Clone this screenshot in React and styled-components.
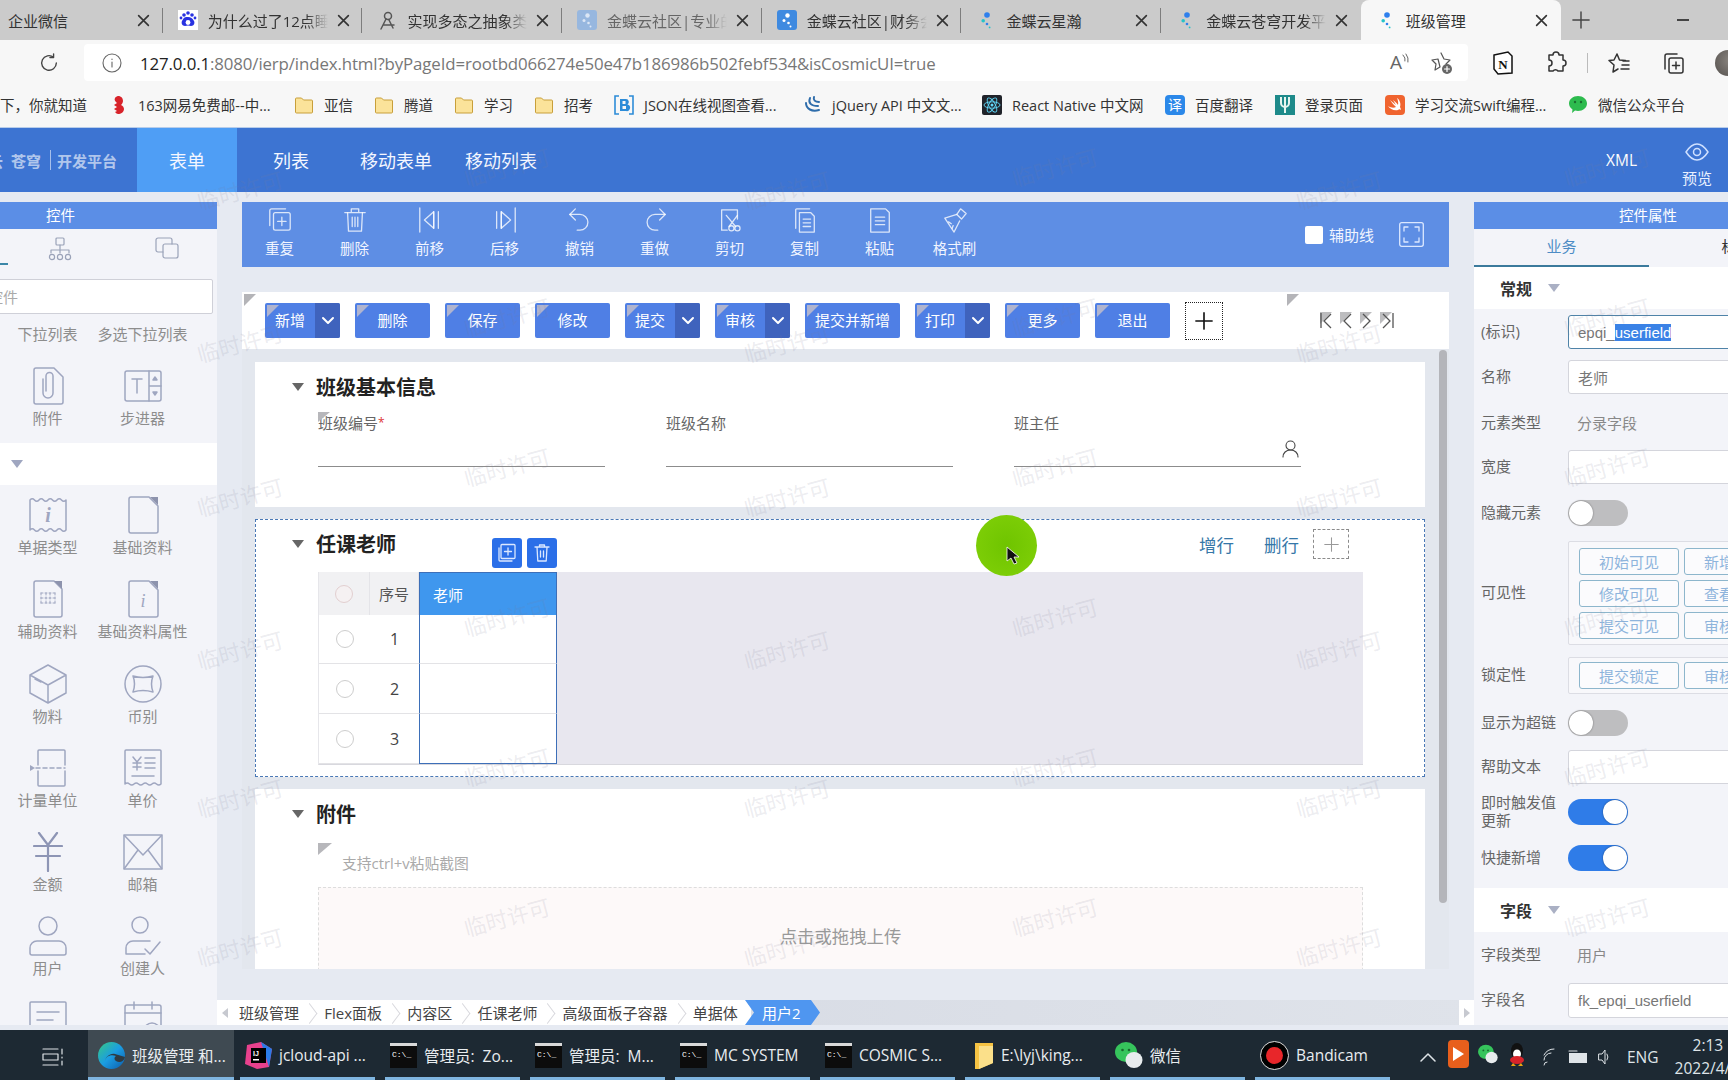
import React from "react";
import styled, { createGlobalStyle } from "styled-components";

const Global = createGlobalStyle`
  html, body { margin: 0; padding: 0; width: 1728px; height: 1080px; overflow: hidden; background: #e6eaf2; }
  body { font-family: "Open Sans", "Noto Sans CJK SC", sans-serif; }
  #root { width: 1728px; height: 1080px; }
  * { box-sizing: border-box; }
`;
const Page = styled.div`position: relative; width: 1728px; height: 1080px; overflow: hidden; display: flex; flex-direction: column; background: #e6eaf2;`;
const Ico = styled.svg`display: block; flex: none; fill: none; stroke: currentColor; stroke-width: 1.5; stroke-linecap: round; stroke-linejoin: round;`;

/* ---- browser chrome ---- */
const TabStrip = styled.div`display: flex; height: 40px; flex: none; background: #cbcbcb; padding-left: 0; margin-left: -37px; width: 1800px;`;
const Tab = styled.div`
  position: relative; flex: none; width: 199.7px; height: 40px; display: flex; align-items: center; padding-left: 15px;
  background: ${p => (p.$active ? "#f7f7f7" : "transparent")};
  border-radius: ${p => (p.$active ? "8px 8px 0 0" : "0")};
  &::after { content: ""; display: ${p => (p.$noSep ? "none" : "block")}; position: absolute; right: 0; top: 8px; height: 25px; width: 1px; background: #7d7d7d; }
`;
const TabIcon = styled.span`flex: none; width: 20px; height: 20px; margin-right: 10px; display: block;`;
const TabText = styled.span`
  flex: none; width: 120px; overflow: hidden; white-space: nowrap; font-size: 15px; color: ${p => (p.$dim ? "#666" : "#333")};
  -webkit-mask-image: ${p => (p.$fade ? "linear-gradient(90deg,#000 82%,transparent 100%)" : "none")};
`;
const TabClose = styled.span`flex: none; margin-left: 9px; color: #333; display: block;`;
const NewTab = styled.div`flex: none; margin-left: 11px; color: #444; display: flex; align-items: center;`;
const WinMin = styled.div`flex: none; margin-left: 87px; width: 12px; height: 1.5px; background: #444; align-self: center;`;

const AddressRow = styled.div`flex: none; height: 46px; background: #f7f7f7; display: flex; align-items: center; padding-top: 0; position: relative;`;
const Reload = styled.div`flex: none; width: 84px; padding-left: 38px; color: #444;`;
const UrlBar = styled.div`flex: none; width: 1384px; height: 37px; margin-top: -1px; background: #fff; border-radius: 4px; display: flex; align-items: center; padding-left: 18px; color: #666;`;
const UrlText = styled.div`flex: none; width: 810px; margin: 2px 0 0 18px; font-size: 16.85px; letter-spacing: -0.12px; color: #777; white-space: nowrap; span { color: #222; }`;
const UrlRight = styled.div`margin-left: auto; display: flex; align-items: center; gap: 20px; padding-right: 14px; color: #555;`;
const ReadAloud = styled.div`font-size: 19px; color: #666; line-height: 1; display: flex;`;
const Ext = styled.div`flex: none; display: flex; align-items: center; margin-left: 24px; color: #333; gap: 30px;`;
const Divider = styled.span`display: block; width: 1px; height: 20px; background: #bbb; margin: 0 -11px;`;
const Avatar = styled.span`display: block; width: 26px; height: 26px; border-radius: 50%; background: radial-gradient(circle at 60% 40%, #8a8580, #54504d); flex: none;`;

const BookmarkBar = styled.div`flex: none; height: 42px; background: #f7f7f7; display: flex; align-items: center; overflow: hidden; border-bottom: 1px solid #b8cdea; padding-bottom: 4px;`;
const Bookmark = styled.div`flex: none; width: ${p => p.$w}px; display: flex; align-items: center; gap: ${p => p.$g ?? 10}px; font-size: 14.5px; color: #333; white-space: nowrap; overflow: hidden;`;
const BIcon = styled.span`display: block; flex: none; width: 20px; height: 20px;`;

const Header = styled.div`flex: none; height: 64px; background: #3d74d2; display: flex; align-items: stretch; color: #fff;`;
const Logo = styled.div`flex: none; width: 137px; display: flex; align-items: center; font-size: 15px; font-weight: 700; color: rgba(255,255,255,.62); white-space: nowrap; overflow: hidden;`;
const LogoMark = styled.span`margin-left: -12px; width: 23px;`;
const LogoBar = styled.span`display: block; width: 1px; height: 20px; background: rgba(255,255,255,.55); margin: 0 6px 0 9px;`;
const NavItem = styled.div`flex: none; width: ${p => p.$w}px; display: flex; align-items: center; justify-content: center; font-size: 18px; color: #f4f7ff; background: ${p => (p.$active ? "#4f9ef5" : "transparent")};`;
const HeadRight = styled.div`margin-left: auto; display: flex; align-items: center; padding-right: 16px;`;
const Xml = styled.div`font-size: 15.5px; margin-right: 45px; margin-top: 0;`;
const Preview = styled.div`display: flex; flex-direction: column; align-items: center; font-size: 15px; gap: 3px; padding-top: 8px; color: #eaf1ff;`;

/* ---- main ---- */
const Main = styled.div`flex: none; height: 838px; display: flex; padding-top: 10px;`;
const PanelTitle = styled.div`flex: none; height: 27px; background: #5b8ee6; color: #fff; font-size: 14.5px; display: flex; align-items: center; padding-left: ${p => p.$pl}px; padding-bottom: 2px;`;

const LeftPanel = styled.aside`flex: none; width: 217px; height: 823px; background: #f3f4f9; overflow: hidden; display: flex; flex-direction: column;`;
const LeftTabs = styled.div`position: relative; flex: none; height: 38px; display: flex; gap: 83px; padding: 8px 0 0 48px; color: #9aa2b8;
  &::before { content: ""; position: absolute; left: 0; bottom: 2px; width: 8px; height: 2px; background: #3b87a8; }`;
const Search = styled.div`flex: none; margin: 12px 0 0 -50px; width: 263px; height: 35px; background: #fff; border: 1px solid #cfd0d8; border-radius: 2px; display: flex; align-items: center; padding-left: 7px; font-size: 15px; color: #aaa;`;
const PaletteGrid = styled.div`flex: none; display: grid; grid-template-columns: 95px 95px; grid-auto-rows: ${p => p.$row}px; padding-top: ${p => p.$pt}px;`;
const TextOnly = styled.div`flex: none; display: grid; grid-template-columns: 95px 95px; margin-top: 10px; padding-bottom: 1px; font-size: 15px; line-height: 20px; color: #8d8d8d; text-align: center;`;
const Cell = styled.div`display: flex; flex-direction: column; align-items: center; color: #9fa6c0;`;
const CellIcon = styled.div`height: 40px; display: flex; align-items: center; justify-content: center;`;
const CellLabel = styled.div`margin-top: 2px; font-size: 15px; line-height: 20px; color: #8d8d8d; white-space: nowrap;`;
const GroupBand = styled.div`flex: none; height: 42px; background: #fff; padding-left: 11px; display: flex; align-items: center; margin-top: 0;`;
const DownTri = styled.span`display: block; flex: none; width: 0; height: 0; border-left: ${p => p.$s}px solid transparent; border-right: ${p => p.$s}px solid transparent; border-top: ${p => p.$s * 1.35}px solid ${p => p.$c};`;

const Center = styled.section`flex: none; width: 1257px; display: flex; flex-direction: column;`;
const CenterBody = styled.div`flex: none; height: 767px; padding: 0 25px; display: flex; flex-direction: column;`;
const Toolbar = styled.div`flex: none; height: 65px; background: #5e8ee4; display: flex; color: rgba(255,255,255,.78);`;
const ToolItem = styled.div`flex: none; width: 75px; display: flex; flex-direction: column; align-items: center; padding-top: 5px;`;
const ToolLabel = styled.div`margin-top: 6px; font-size: 14.5px; line-height: 20px; color: #f1f5ff;`;
const ToolRight = styled.div`margin-left: auto; display: flex; align-items: center; padding-right: 25px; color: #f1f5ff; font-size: 15px;`;
const CheckBox = styled.span`display: block; width: 18px; height: 18px; background: #fff; border-radius: 2px; margin-right: 6px;`;
const FullScreen = styled.div`margin-left: 25px; color: #dce8ff;`;

const ButtonBar = styled.div`
  position: relative; flex: none; height: 57px; margin-top: 25px; background: #fff; display: flex; align-items: center; padding-left: 23px; gap: 15px;
  &::before { content: ""; position: absolute; left: 2px; top: 2px; width: 12px; height: 12px; background: #b4b4b8; clip-path: polygon(0 0,100% 0,0 100%); }
  &::after { content: ""; position: absolute; left: 1045px; top: 2px; width: 12px; height: 12px; background: #b4b4b8; clip-path: polygon(0 0,100% 0,0 100%); }
`;
const ActBtn = styled.div`
  position: relative; flex: none; width: ${p => p.$w || 75}px; height: 35px; border-radius: 2px; background: #4f7fe5; color: #fff; font-size: 15px; display: flex; overflow: hidden;
  &::before { content: ""; position: absolute; left: 2px; top: 2px; width: 12px; height: 12px; background: #b0b4cf; clip-path: polygon(0 0,100% 0,0 100%); }
`;
const ActText = styled.span`flex: 1; display: flex; align-items: center; justify-content: center; padding-bottom: 2px;`;
const ActCaret = styled.span`flex: none; width: 25px; background: #3f63bd; display: flex; align-items: center; justify-content: center; color: #fff;`;
const PlusBox = styled.div`flex: none; width: 38px; height: 38px; border: 1px dotted #222; display: flex; align-items: center; justify-content: center; color: #111;`;
const PageNav = styled.div`margin-left: auto; padding-right: 55px; display: flex; gap: 6px; color: #555;`;

const Body = styled.div`flex: none; height: 620px; display: flex; background: #e3e7ee;`;
const Sections = styled.div`flex: none; width: 1183px; padding-left: 13px; display: flex; flex-direction: column; overflow: hidden;`;
const Track = styled.div`flex: none; width: 24px; padding: 1px 2px 66px 14px;`;
const Thumb = styled.div`height: 100%; background: #b4b5ba; border-radius: 4px;`;
const Sec = styled.div`
  position: relative; flex: ${p => (p.$h ? "none" : "1")}; height: ${p => (p.$h ? p.$h + "px" : "auto")}; margin-top: ${p => p.$mt}px; background: #fff; overflow: hidden;
  outline: ${p => (p.$selected ? "1px dashed #4a78b5" : "none")}; outline-offset: -1px;
`;
const SecHead = styled.div`height: 50px; display: flex; align-items: center; padding-left: 37px;`;
const SecTitle = styled.h3`margin: 1px 0 0 12px; font-size: 20px; font-weight: 700; color: #222; line-height: 1;`;
const SecActions = styled.div`margin-left: auto; padding-right: 76px; display: flex; align-items: center; color: #3577a8; font-size: 17.5px;`;
const RowAct = styled.span`display: block; margin-right: 30px;`;
const SmallPlus = styled.div`width: 36px; height: 30px; margin-left: -16px; border: 1px dashed #8b8b8b; display: flex; align-items: center; justify-content: center; color: #999;`;
const Fields = styled.div`display: grid; grid-template-columns: repeat(3, 287px); column-gap: 61px; margin-left: 63px;`;
const Field = styled.div`position: relative; height: 55px; border-bottom: 1px solid #8c8c8c; font-size: 15px; line-height: 22px; color: #666;
  &::before { content: ""; display: ${p => (p.$mark ? "block" : "none")}; position: absolute; left: 0; top: 0; width: 12px; height: 10px; background: #b7b7bb; clip-path: polygon(0 0,100% 0,0 100%); }
  em { color: #d33; font-style: normal; font-size: 12px; vertical-align: top; }`;
const FieldIcon = styled.div`position: absolute; right: 2px; top: 28px; color: #444;`;
const FloatBtns = styled.div`position: absolute; left: 237px; top: 19px; display: flex; gap: 5px;`;
const FloatBtn = styled.div`width: 30px; height: 30px; border-radius: 3px; background: #2b6fe8; color: #dbe8ff; display: flex; align-items: center; justify-content: center;`;

const Table = styled.div`margin: 3px 0 0 63px; width: 1045px; display: grid; grid-template-columns: 51px 49px 138px 1fr; grid-template-rows: 43px 49px 50px 50px; border-bottom: 1px solid #d8d8de; border-left: 1px solid #e6e6ea; font-size: 15px;`;
const HeadCell = styled.div`background: #f1f1f3; color: #555; display: flex; align-items: center; justify-content: center; border-right: 1px solid #e4e4e8;`;
const TeacherHead = styled.div`background: #3f97ee; color: #fff; display: flex; align-items: center; padding-left: 13px; border: solid #3d6fb8; border-width: 1px 1px 0 1px;`;
const BodyCell = styled.div`display: flex; align-items: center; justify-content: center; border-bottom: 1px solid #e3e3e6; color: #444; font-size: 16px;`;
const TeacherCell = styled.div`background: #fff; border-left: 1px solid #3d6fb8; border-right: 1px solid #3d6fb8; border-bottom: 1px solid ${p => (p.$last ? "#3d6fb8" : "#e3e3e6")};`;
const Rest = styled.div`grid-column: 4; grid-row: 1 / 5; background: #e8e7ef;`;
const Radio = styled.span`display: block; width: 18px; height: 18px; border-radius: 50%; border: 1px solid ${p => (p.$head ? "#e2cfd0" : "#cdcdcd")}; background: ${p => (p.$head ? "#f5f1f2" : "#fff")};`;

const TipRow = styled.div`position: relative; height: 48px; margin-left: 63px; padding: 14px 0 0 24px; font-size: 14.8px; line-height: 20px; color: #aaa;
  &::before { content: ""; position: absolute; left: 0; top: 4px; width: 14px; height: 12px; background: #b7b7bb; clip-path: polygon(0 0,100% 0,0 100%); }`;
const Upload = styled.div`margin-left: 63px; width: 1045px; height: 200px; border: 1px dashed #ddd; background: #fdf9f9; padding-top: 35px; text-align: center; font-size: 17.4px; line-height: 26px; color: #999;`;

const Crumbs = styled.div`flex: none; height: 25px; margin-top: 31px; display: flex; background: linear-gradient(90deg,#d4d8e2,#dfe3ea); font-size: 15px; color: #444;`;
const CrumbEnd = styled.div`flex: none; width: ${p => p.$w}px; background: #fff; display: flex; align-items: center; justify-content: center;
  ${p => (p.$right ? "margin-left: auto;" : "")}
`;
const SideTri = styled.span`display: block; width: 0; height: 0; border-top: 5px solid transparent; border-bottom: 5px solid transparent;
  ${p => (p.$dir === "l" ? "border-right: 6px solid #c7c9d0;" : "border-left: 6px solid #c7c9d0;")}`;
const CrumbRow = styled.div`flex: none; display: flex; align-items: center; background: #fff; padding-left: 7px; width: 519px;`;
const Crumb = styled.span`position: relative; flex: none; margin-right: 25.2px; white-space: nowrap;
  &::after { content: ""; position: absolute; right: -17px; top: 5px; width: 12px; height: 12px; border-top: 1px solid #d8d8dd; border-right: 1px solid #d8d8dd; transform: rotate(45deg) skew(8deg,8deg); }`;
const CrumbActive = styled.span`flex: none; width: 75px; margin-left: -6px; padding-left: 17px; display: flex; align-items: center; color: #fff; background: #4f96f0; clip-path: polygon(0 0, calc(100% - 9px) 0, 100% 50%, calc(100% - 9px) 100%, 0 100%, 9px 50%);`;

/* ---- right panel ---- */
const RightPanel = styled.aside`flex: none; width: 254px; height: 823px; background: #f3f4f9; overflow: hidden; display: flex; flex-direction: column;`;
const RightTabs = styled.div`flex: none; height: 38px; display: flex; font-size: 15px;`;
const RightTab = styled.div`flex: none; width: 175px; display: flex; align-items: center; justify-content: center; color: ${p => (p.$active ? "#4d8cc5" : "#333")}; border-bottom: 2px solid ${p => (p.$active ? "#3b7a9c" : "transparent")}; padding-bottom: 4px;`;
const PropSection = styled.div`flex: none; height: ${p => p.$h}px; margin-top: ${p => p.$mt || 0}px; background: #fff; display: flex; align-items: center; padding-left: 26px; gap: 16px; font-size: 16px; font-weight: 700; color: #333;`;
const PropRow = styled.div`flex: none; height: ${p => p.$h}px; margin-top: ${p => p.$mt}px; display: flex; align-items: center; padding-left: 7px; width: 500px;`;
const PropLabel = styled.div`flex: none; width: 87px; font-size: 15px; line-height: 18px; color: #666; padding: 0 8px 2px 0;`;
const PropValue = styled.div`padding: 0 0 2px 9px; font-size: 15px; color: #888;`;
const PropInput = styled.div`flex: none; width: 300px; height: ${p => (p.$tall ? 35 : 34)}px; background: #fff; border: 1px solid ${p => (p.$focus ? "#4f83a8" : "#d4d5dc")}; border-radius: 3px; display: flex; align-items: center; padding-left: 9px; font-size: 15px; color: #777;`;
const Mono = styled.span`font-family: "Liberation Sans", sans-serif; white-space: nowrap; mark { background: #3a82e6; color: #fff; }`;
const Toggle = styled.div`position: relative; flex: none; width: 60px; height: 26px; border-radius: 13px; background: ${p => (p.$on ? "#2f7ce8" : "#bebec0")};
  &::after { content: ""; position: absolute; top: 1px; ${p => (p.$on ? "right: 1px;" : "left: 1px;")} width: 24px; height: 24px; border-radius: 50%; background: #fff; box-shadow: 0 0 2px rgba(0,0,0,.45); }`;
const BtnBox = styled.div`flex: none; width: 300px; border: 1px solid #dcdde4; background: #f8f8fb; border-radius: 2px; padding: ${p => (p.$single ? "4px" : "6px")} 0 ${p => (p.$single ? "4px" : "5px")} 10px; display: grid; grid-template-columns: repeat(2, 100px); column-gap: 5px; row-gap: 5px;`;
const OptBtn = styled.div`height: 27px; border: 1px solid #8db6cc; border-radius: 3px; background: #fbfbfd; display: flex; align-items: center; justify-content: center; font-size: 15px; color: #8eb4dc;`;

/* ---- taskbar ---- */
const Taskbar = styled.div`flex: none; margin-top: 0; height: 50px; background: #1d2933; display: flex; align-items: stretch; color: #e9edf0; font-size: 15.5px;`;
const Start = styled.div`flex: none; width: 88px; display: flex; align-items: center; padding: 3px 0 0 42px; color: #dfe4e8;`;
const TaskItem = styled.div`flex: none; width: ${p => p.$w || 135}px; margin-right: ${p => p.$mr ?? 10}px; display: flex; align-items: center; gap: 7px; padding: 3px 0 0 ${p => p.$pl || 5}px; background: ${p => (p.$active ? "#3f4a52" : "transparent")}; border-bottom: 3px solid #7fb5e0; white-space: nowrap; overflow: hidden;`;
const Tray = styled.div`flex: none; display: flex; align-items: center; margin-left: 20px; padding-top: 3px; color: #dfe4e8;`;
const TrayIcon = styled.span`display: block; flex: none; margin-right: ${p => p.$mr}px;`;
const Clock = styled.div`flex: none; font-size: 15.5px; line-height: 23px; white-space: nowrap; width: 76px; margin-left: 16px; div:first-child { padding-left: 18px; }`;

/* ---- overlays ---- */
const Overlay = styled.div`position: absolute; inset: 0; pointer-events: none;`;
const Mark = styled.div`position: absolute; left: ${p => p.$x - 44}px; top: ${p => p.$y - 15}px; width: 88px; font-size: 22px; line-height: 30px; white-space: nowrap; color: rgba(125,125,150,.15); transform: rotate(-15deg);`;
const Spot = styled.div`position: absolute; left: 976px; top: 515px; width: 61px; height: 61px; border-radius: 50%; background: radial-gradient(circle, #6fc400 0%, #7ccd06 70%, #93dc18 100%);`;
const Pointer = styled.svg`position: absolute; left: 1006px; top: 546px;`;

/* ---- icons ---- */
const X = () => <Ico width="13" height="13" viewBox="0 0 12 12"><path d="M1.5 1.5l9 9M10.5 1.5l-9 9"/></Ico>;
const Dots = ({ a = "#2f80ed", b = "#25c4c9", bg }) => (
  <svg width="20" height="20" viewBox="0 0 20 20">
    {bg && <rect width="20" height="20" rx="3" fill={bg}/>}
    <circle cx="11" cy="5" r="2.8" fill={a}/><circle cx="7.2" cy="10.8" r="1.8" fill={b}/><circle cx="11" cy="14" r="1.3" fill={a}/><circle cx="13.6" cy="17.4" r="0.9" fill={b}/>
  </svg>
);
const Kd = ({ bg, c = "#fff" }) => (
  <svg width="20" height="20" viewBox="0 0 20 20"><rect width="20" height="20" rx="3" fill={bg}/><circle cx="10.5" cy="5.5" r="2.2" fill={c}/><circle cx="7" cy="10.5" r="1.5" fill={c}/><circle cx="11.5" cy="13" r="1.3" fill={c}/><circle cx="13.5" cy="16.5" r="1" fill={c}/></svg>
);
const Baidu = () => (
  <svg width="20" height="20" viewBox="0 0 20 20"><rect width="20" height="20" fill="#fff"/><path d="M4 11c2-4 3-4 6-4s4 1 6 4c1 2 0 5-3 5-1 0-2-.5-3-.5S8 16 7 16c-3 0-4-3-3-5z" fill="#2932e1"/><circle cx="6" cy="5" r="1.8" fill="#2932e1"/><circle cx="14" cy="5" r="1.8" fill="#2932e1"/><circle cx="10" cy="3" r="1.8" fill="#2932e1"/><circle cx="3" cy="8" r="1.4" fill="#2932e1"/><circle cx="17" cy="8" r="1.4" fill="#2932e1"/><circle cx="10" cy="12.5" r="2.4" fill="#fff"/></svg>
);
const Swirl = () => <Ico width="20" height="20" viewBox="0 0 20 20" style={{ color: "#555" }}><circle cx="11" cy="6" r="3.5"/><path d="M9 9L4 19M12 10l4 8M7 15h10"/></Ico>;
const Folder = () => <svg width="20" height="20" viewBox="0 0 20 20"><path d="M1.5 4a1 1 0 0 1 1-1h5l2 2h8a1 1 0 0 1 1 1v11a1 1 0 0 1-1 1h-15a1 1 0 0 1-1-1z" fill="#fbe39a" stroke="#c89f3a"/></svg>;
const B163 = () => <svg width="20" height="20" viewBox="0 0 20 20"><path d="M10 1c3.5 0 5 2.500 5 5 0 1.500-1 3-2 4 2 1 3 2.500 3 4 0 3-3 5-6 5-1 0-2-1-3-2l2-1-3-2 3-2-3-2 3-2C7 6 6 5 7 3c.5-1 2-2 3-2z" fill="#d8232a"/></svg>;
const BJson = () => <svg width="20" height="20" viewBox="0 0 20 20"><path d="M5 1H1v18h4M15 1h4v18h-4" fill="none" stroke="#2d8cd8" strokeWidth="1.6"/><path d="M6 4h6a3 3 0 0 1 1.500 5.500A3 3 0 0 1 12 16H6zM8.500 6v3h3V6zM8.500 11v3h3.500v-3z" fill="#2d8cd8" fillRule="evenodd"/></svg>;
const BJq = () => <svg width="20" height="20" viewBox="0 0 20 20" fill="none" stroke="#2f6dab" strokeWidth="2"><path d="M4 8c0 6 6 9 13 7M8 3c-2 5 1 8 8 8M12 2c-1 3 1 5 5 5" strokeLinecap="round"/></svg>;
const BReact = () => <svg width="20" height="20" viewBox="0 0 20 20"><rect width="20" height="20" rx="2" fill="#20232a"/><g fill="none" stroke="#61dafb" strokeWidth=".9"><ellipse cx="10" cy="10" rx="8" ry="3.200"/><ellipse cx="10" cy="10" rx="8" ry="3.200" transform="rotate(60 10 10)"/><ellipse cx="10" cy="10" rx="8" ry="3.200" transform="rotate(120 10 10)"/></g><circle cx="10" cy="10" r="1.500" fill="#61dafb"/></svg>;
const BYi = () => <svg width="20" height="20" viewBox="0 0 20 20"><rect width="20" height="20" rx="4" fill="#2b88e9"/><text x="10" y="15" fontSize="14" fill="#fff" textAnchor="middle" fontFamily="Noto Sans CJK SC">译</text></svg>;
const BLogin = () => <svg width="20" height="20" viewBox="0 0 20 20"><rect width="20" height="20" fill="#1e8a8a"/><path d="M6 2v6a4 4 0 0 0 8 0V2M10 2v16" stroke="#e7f5ef" strokeWidth="2" fill="none"/></svg>;
const BSwift = () => <svg width="20" height="20" viewBox="0 0 20 20"><rect width="20" height="20" rx="4" fill="#f0642f"/><path d="M12 3c3 2 4 6 3 9 1 2 1 3 1 3-1-1-2-1-3 0-4 1-8-1-10-4 3 2 6 2 8 1-2-2-4-4-6-7 2 2 4 3 6 5-1-2-2-3-3-5 2 2 4 3 5 5 .5-2 0-5-1-7z" fill="#fff"/></svg>;
const Wechat = ({ s = 20 }) => <svg width={s} height={s} viewBox="0 0 20 20"><path d="M10 1c5 0 9 3.200 9 7.500S15 16 10 16c-1 0-2-.2-3-.5L4 18l.5-3.500C2.500 13 1 11 1 8.500 1 4.200 5 1 10 1z" fill="#2dbb4e"/><circle cx="7" cy="7" r="1.200" fill="#1a6e30"/><circle cx="13" cy="7" r="1.200" fill="#1a6e30"/></svg>;

const Eye = () => <Ico width="26" height="24" viewBox="0 0 26 24" style={{ color: "#cfe0ff" }}><path d="M13 4c5 0 9 5 11 8-2 3-6 8-11 8S4 15 2 12c2-3 6-8 11-8z"/><circle cx="13" cy="12" r="3.500"/></Ico>;

const toolIcons = {
  dup: <><path d="M3 20V4a2 2 0 0 1 2-2h15"/><rect x="7" y="6" width="18" height="19" rx="2"/><path d="M16 11v9M11.500 15.500h9"/></>,
  del: <><path d="M3 6h22M10 6V2h8v4"/><path d="M6 6l1 20h14l1-20"/><path d="M11 11v10M14 11v10M17 11v10"/></>,
  prev: <><path d="M3 1v26"/><path d="M18 5L8 14l10 9z"/><path d="M23 5v18M18 5v18"/></>,
  next: <><path d="M25 1v26"/><path d="M10 5l10 9-10 9z"/><path d="M5 5v18M10 5v18"/></>,
  undo: <><path d="M9 2L3 8l6 6"/><path d="M3 8h11a8.500 8.500 0 0 1 0 17h-3"/></>,
  redo: <><path d="M19 2l6 6-6 6"/><path d="M25 8H14a8.500 8.500 0 0 0 0 17h3"/></>,
  cut: <><path d="M5 25V3h17v10M5 25h6"/><circle cx="15.500" cy="23" r="2.800"/><circle cx="22" cy="23" r="2.800"/><path d="M10 9l10 12M22 9L13 21"/></>,
  copy: <><path d="M4 23V3a1 1 0 0 1 1-1h14"/><path d="M8 6h12l4 4v17H8z"/><path d="M12 13h8M12 17h8M12 21h8"/></>,
  paste: <><path d="M4 2h16l4 4v21H4z"/><path d="M9 11h10M9 15h10M9 19h10"/></>,
  brush: <><path d="M20 2l6 5-5 6-5-5z"/><path d="M16 8L3 12l10 15 6-12"/><path d="M7 16l3 2M12 20l-1 3"/></>,
};
const tools = [["重复","dup"],["删除","del"],["前移","prev"],["后移","next"],["撤销","undo"],["重做","redo"],["剪切","cut"],["复制","copy"],["粘贴","paste"],["格式刷","brush"]];

const Doc = ({ children, w = 32, dark = true }) => (
  <Ico width={w} height="38" viewBox="0 0 32 38">
    <path d="M2 3a2 2 0 0 1 2-2h18l9 9v25a2 2 0 0 1-2 2H4a2 2 0 0 1-2-2z"/>
    {dark && <path d="M23 1l8 8V1z" fill="#8d93ad" stroke="none"/>}
    {children}
  </Ico>
);
const InfoI = () => <text x="16" y="27" fontSize="18" fontStyle="italic" fontFamily="Liberation Serif" fill="currentColor" stroke="none" textAnchor="middle">i</text>;
const palette1 = [
  { label: "附件", icon: <Doc dark={false}><path d="M11 12v14a5 5 0 0 0 10 0V9a3.500 3.500 0 0 0-7 0v15"/></Doc> },
  { label: "步进器", icon: <Ico width="38" height="32" viewBox="0 0 38 32"><rect x="1" y="1" width="36" height="30" rx="2"/><path d="M25 1v30M25 16h12M8 9h10M13 9v14"/><path d="M29 10l2-3 2 3zM29 22l2 3 2-3z" fill="currentColor"/></Ico> },
];
const palette2 = [
  { label: "单据类型", icon: <Ico width="38" height="38" viewBox="0 0 38 38"><path d="M1 4q2.250-2.500 4.500 0t4.500 0 4.500 0 4.500 0 4.500 0 4.500 0 4.500 0 4.500 0V34q-2.250 2.500-4.500 0t-4.500 0-4.500 0-4.500 0-4.500 0-4.500 0-4.500 0-4.500 0z"/><text x="19" y="26" fontSize="20" fontStyle="italic" fontWeight="700" fontFamily="Liberation Serif" fill="currentColor" stroke="none" textAnchor="middle">i</text></Ico> },
  { label: "基础资料", icon: <Doc /> },
  { label: "辅助资料", icon: <Ico width="32" height="38" viewBox="0 0 32 38"><path d="M2 3a2 2 0 0 1 2-2h18l8 8v26a2 2 0 0 1-2 2H4a2 2 0 0 1-2-2z"/><path d="M22 1l8 8V1z" fill="#8d93ad" stroke="none"/><path d="M9 13h14M9 18h14M9 23h14M9 13v10M14 13v10M18 13v10M23 13v10" strokeDasharray="2 2" strokeWidth="1"/></Ico> },
  { label: "基础资料属性", icon: <Doc><InfoI /></Doc> },
  { label: "物料", icon: <Ico width="38" height="40" viewBox="0 0 38 40"><path d="M19 1L1 11v18l18 10 18-10V11zM1 11l18 10 18-10M19 21v18M6 15l6 3"/></Ico> },
  { label: "币别", icon: <Ico width="38" height="38" viewBox="0 0 38 38"><circle cx="19" cy="19" r="18"/><path d="M9 11q10 3 20 0-3 8 0 16-10-3-20 0 3-8 0-16z"/></Ico> },
  { label: "计量单位", icon: <Ico width="36" height="38" viewBox="0 0 36 38"><path d="M8 16V2a1 1 0 0 1 1-1h25a1 1 0 0 1 1 1v14M8 22v14a1 1 0 0 0 1 1h25a1 1 0 0 0 1-1V22"/><path d="M6 19h29" strokeDasharray="4 3"/><path d="M0 16l5 3-5 3z" fill="currentColor" stroke="none"/></Ico> },
  { label: "单价", icon: <Ico width="38" height="38" viewBox="0 0 38 38"><path d="M1 2a1 1 0 0 1 1-1h34a1 1 0 0 1 1 1v33q-2.250 2-4.500 0t-4.500 0-4.500 0-4.500 0-4.500 0-4.500 0-4.500 0-4.500 0z"/><path d="M9 8l4 5 4-5M9 14h8M9 18h8M13 13v8M21 9h10M21 14h10M21 19h10M8 27h22"/></Ico> },
  { label: "金额", icon: <Ico width="30" height="40" viewBox="0 0 30 40" style={{ strokeWidth: 2.2, color: "#8d95b5" }}><path d="M6 1l9 12 9-12M1 14h28M3 24h24M15 13v26"/></Ico> },
  { label: "邮箱", icon: <Ico width="40" height="36" viewBox="0 0 40 36"><rect x="1" y="1" width="38" height="34" rx="1"/><path d="M1 1l19 20L39 1M1 35l14-19M39 35L25 16"/></Ico> },
  { label: "用户", icon: <Ico width="38" height="40" viewBox="0 0 38 40"><circle cx="19" cy="10" r="9"/><path d="M3 39a2 2 0 0 1-2-2v-5a7 7 0 0 1 7-7h22a7 7 0 0 1 7 7v5a2 2 0 0 1-2 2z"/></Ico> },
  { label: "创建人", icon: <Ico width="38" height="40" viewBox="0 0 38 40"><circle cx="16" cy="9" r="8"/><path d="M21 38H2v-6a7 7 0 0 1 7-7h17M21 33l5 5 10-12"/></Ico> },
  { label: "", icon: <Ico width="38" height="40" viewBox="0 0 38 40"><path d="M37 30V2a1 1 0 0 0-1-1H2a1 1 0 0 0-1 1v36a1 1 0 0 0 1 1h22M8 11h22M8 19h16M8 28h12M24 32l4 4 8-9"/></Ico> },
  { label: "", icon: <Ico width="38" height="40" viewBox="0 0 38 40"><rect x="1" y="4" width="36" height="34" rx="2"/><path d="M1 12h36M10 1v7M28 1v7"/><circle cx="28" cy="30" r="8"/></Ico> },
];

const Chevron = () => <Ico width="14" height="10" viewBox="0 0 14 10" style={{ strokeWidth: 2 }}><path d="M2 2l5 5 5-5"/></Ico>;
const PlusI = ({ s = 20, w = 1.6 }) => <Ico width={s} height={s} viewBox="0 0 20 20" style={{ strokeWidth: w }}><path d="M10 1v18M1 10h18"/></Ico>;

const NavGlyph = ({ d }) => (
  <svg width="14" height="17" viewBox="0 0 14 17"><path d="M0 0h12L0 12z" fill="#bdbdbf"/><path d={d} fill="none" stroke="#555" strokeWidth="1.300"/></svg>
);
const navs = ["M1 1v15M11 2L4 9l7 7", "M11 2L4 9l7 7", "M3 2l7 7-7 7", "M3 2l7 7-7 7M13 1v15"];

const CmdIcon = () => <svg width="27" height="25" viewBox="0 0 27 25"><rect width="27" height="25" fill="#0c0c0c"/><rect width="27" height="3" fill="#d9d9d9"/><text x="2" y="14" fontSize="8" fill="#fff" fontFamily="Liberation Mono">C:\_</text></svg>;
const EdgeIcon = () => <svg width="27" height="27" viewBox="0 0 27 27"><defs><linearGradient id="eg" x1="0" y1="0" x2="1" y2="1"><stop offset="0" stopColor="#37c982"/><stop offset=".5" stopColor="#1b9de2"/><stop offset="1" stopColor="#0d5cab"/></linearGradient></defs><circle cx="13.500" cy="13.500" r="13.500" fill="url(#eg)"/><path d="M27 15c-1 5-6 6-9 4-2-1-2-4 0-5-6-2-11 1-11 6 0-5 5-9 10-8" fill="#2e3a42"/></svg>;
const IjIcon = () => <svg width="27" height="27" viewBox="0 0 27 27"><path d="M2 3l14-3 11 7-3 18-12 2L0 22z" fill="#e8418d"/><path d="M16 0l11 7-3 18z" fill="#2b7be6"/><rect x="6" y="6" width="15" height="15" fill="#000"/><text x="8" y="14" fontSize="7" fontWeight="700" fill="#fff" fontFamily="Liberation Sans">IJ</text><rect x="8" y="17" width="6" height="1.500" fill="#fff"/></svg>;
const ExplorerIcon = () => <svg width="20" height="27" viewBox="0 0 20 27"><path d="M1 1h18v20L5 27H1z" fill="#f6c343"/><path d="M5 4h14v17L5 27z" fill="#fbe08a"/></svg>;
const WxPair = ({ s = 28 }) => <svg width={s} height={s} viewBox="0 0 28 28"><ellipse cx="11" cy="11" rx="11" ry="10" fill="#36c45c"/><circle cx="7.500" cy="9" r="1.300" fill="#186a2e"/><circle cx="14" cy="9" r="1.300" fill="#186a2e"/><ellipse cx="19" cy="19" rx="8.500" ry="8" fill="#e8ecee"/></svg>;
const BandicamIcon = () => <svg width="29" height="29" viewBox="0 0 29 29"><circle cx="14.500" cy="14.500" r="14" fill="#000" stroke="#ddd"/><circle cx="14.500" cy="14.500" r="8.500" fill="#e8262a"/></svg>;

const bookmarks = [
  { w: 108, t: "下，你就知道", first: true },
  { w: 186, i: <B163 />, t: "163网易免费邮--中..." },
  { w: 80, i: <Folder />, t: "亚信" },
  { w: 80, i: <Folder />, t: "腾道" },
  { w: 80, i: <Folder />, t: "学习" },
  { w: 80, i: <Folder />, t: "招考" },
  { w: 188, i: <BJson />, t: "JSON在线视图查看..." },
  { w: 180, i: <BJq />, t: "jQuery API 中文文..." },
  { w: 183, i: <BReact />, t: "React Native 中文网" },
  { w: 110, i: <BYi />, t: "百度翻译" },
  { w: 110, i: <BLogin />, t: "登录页面" },
  { w: 183, i: <BSwift />, t: "学习交流Swift编程..." },
  { w: 160, i: <Wechat />, t: "微信公众平台" },
];
const tabs = [
  { t: "企业微信" },
  { t: "为什么过了12点睡", i: <Baidu />, fade: 1 },
  { t: "实现多态之抽象类", i: <Swirl />, fade: 1 },
  { t: "金蝶云社区|专业的", i: <Kd bg="#97b7df" c="#dbe6f5" />, fade: 1, dim: 1 },
  { t: "金蝶云社区|财务会", i: <Kd bg="#3f8ae0" />, fade: 1 },
  { t: "金蝶云星瀚", i: <Dots /> },
  { t: "金蝶云苍穹开发平", i: <Dots />, fade: 1 },
  { t: "班级管理", i: <Dots />, active: 1 },
];
const actions = [
  { t: "新增", c: 1 }, { t: "删除" }, { t: "保存" }, { t: "修改" }, { t: "提交", c: 1 }, { t: "审核", c: 1 },
  { t: "提交并新增", w: 95 }, { t: "打印", c: 1 }, { t: "更多" }, { t: "退出" },
];
const marks = [];
for (const x of [240, 787, 1339]) for (const y of [190, 343, 497, 650, 798, 947]) marks.push([x, y]);
for (const x of [507, 1055, 1607]) for (const y of [167, 317, 467, 617, 767, 917]) marks.push([x, y]);

const Palette = ({ items, row, pt }) => (
  <PaletteGrid $row={row} $pt={pt}>
    {items.map((c, i) => (
      <Cell key={i}><CellIcon>{c.icon}</CellIcon><CellLabel>{c.label}</CellLabel></Cell>
    ))}
  </PaletteGrid>
);

const Prop = ({ label, h = 34, mt, children }) => (
  <PropRow $h={h} $mt={mt}><PropLabel>{label}</PropLabel>{children}</PropRow>
);

export default function App() {
  return (
    <Page>
      <Global />
      <TabStrip>
        {tabs.map((t, i) => (
          <Tab key={i} $active={t.active} $noSep={i >= 6}>
            <TabIcon>{t.i}</TabIcon>
            <TabText $fade={t.fade} $dim={t.dim}>{t.t}</TabText>
            <TabClose><X /></TabClose>
          </Tab>
        ))}
        <NewTab><PlusI s={18} /></NewTab>
        <WinMin />
      </TabStrip>

      <AddressRow>
        <Reload><Ico width="22" height="22" viewBox="0 0 24 24"><path d="M20 12a8 8 0 1 1-3-6.300M17 2v4h-4"/></Ico></Reload>
        <UrlBar>
          <Ico width="20" height="20" viewBox="0 0 20 20" style={{ strokeWidth: 1.1 }}><circle cx="10" cy="10" r="9"/><path d="M10 9v5M10 6v.5"/></Ico>
          <UrlText><span>127.0.0.1</span>:8080/ierp/index.html?byPageId=rootbd066274e50e47b186986b502febf534&amp;isCosmicUI=true</UrlText>
          <UrlRight>
            <ReadAloud>A<Ico width="8" height="16" viewBox="0 0 8 16" style={{ strokeWidth: 1 }}><path d="M1 2q3 3 2 6M4 1q3 4 2 8"/></Ico></ReadAloud>
            <Ico width="24" height="24" viewBox="0 0 24 24" style={{ strokeWidth: 1.2 }}><path d="M11 2l3 6 6 1-4 4M10 16l-5 3 1-6-4-4 6-1z"/><circle cx="17" cy="18" r="5" fill="#666" stroke="none"/><path d="M17 15.500v5M14.500 18h5" stroke="#fff"/></Ico>
          </UrlRight>
        </UrlBar>
        <Ext>
          <svg width="22" height="24" viewBox="0 0 22 24"><path d="M2 4l14-3 4 4v17l-14 1-4-5z" fill="#fff" stroke="#111" strokeWidth="1.500"/><text x="11" y="18" fontSize="13" fontWeight="700" fontFamily="Liberation Serif" textAnchor="middle" fill="#111">N</text></svg>
          <Ico width="24" height="24" viewBox="0 0 24 24"><path d="M9 4a3 3 0 0 1 6 0h4v5a3 3 0 0 1 0 6v5h-5a3 3 0 0 0-5 0H5v-5a3 3 0 0 0 0-6V4z"/></Ico>
          <Divider />
          <Ico width="24" height="24" viewBox="0 0 24 24"><path d="M10 3l2.500 6 6 .5M7 14l-1 7 5-3M10 3L7 9l-5 .5L7 14M15 14h7M14 18h8M16 10h6"/></Ico>
          <Ico width="24" height="24" viewBox="0 0 24 24"><path d="M4 18V5a2 2 0 0 1 2-2h10"/><rect x="8" y="7" width="14" height="15" rx="2"/><path d="M15 11v7M11.500 14.500h7"/></Ico>
          <Avatar />
        </Ext>
      </AddressRow>

      <BookmarkBar>
        {bookmarks.map((b, i) => (
          <Bookmark key={i} $w={b.w}>
            {b.i && <BIcon>{b.i}</BIcon>}
            <span>{b.t}</span>
          </Bookmark>
        ))}
      </BookmarkBar>

      <Header>
        <Logo><LogoMark>云</LogoMark>苍穹<LogoBar />开发平台</Logo>
        <NavItem $w={100} $active>表单</NavItem>
        <NavItem $w={108}>列表</NavItem>
        <NavItem $w={102}>移动表单</NavItem>
        <NavItem $w={108}>移动列表</NavItem>
        <HeadRight>
          <Xml>XML</Xml>
          <Preview><Eye />预览</Preview>
        </HeadRight>
      </Header>

      <Main>
        <LeftPanel>
          <PanelTitle $pl={46}>控件</PanelTitle>
          <LeftTabs>
            <Ico width="24" height="24" viewBox="0 0 24 24" style={{ strokeWidth: 1.2 }}><rect x="8" y="1" width="8" height="7" rx="1"/><path d="M12 8v4M3 16v-3h18v3M12 13v3"/><circle cx="4" cy="20" r="2.600"/><circle cx="12" cy="20" r="2.600"/><circle cx="20" cy="20" r="2.600"/></Ico>
            <Ico width="24" height="22" viewBox="0 0 24 22" style={{ strokeWidth: 1.2 }}><path d="M8 15H3a2 2 0 0 1-2-2V3a2 2 0 0 1 2-2h12a2 2 0 0 1 2 2v4"/><rect x="8" y="7" width="15" height="14" rx="2"/></Ico>
          </LeftTabs>
          <Search>搜索控件</Search>
          <TextOnly><span>下拉列表</span><span>多选下拉列表</span></TextOnly>
          <Palette items={palette1} row={77} pt={21} />
          <GroupBand><DownTri $s={6} $c="#9fa6c0" /></GroupBand>
          <Palette items={palette2} row={84.3} pt={10} />
        </LeftPanel>

        <Center>
          <CenterBody>
            <Toolbar>
              {tools.map(([t, k]) => (
                <ToolItem key={k}>
                  <Ico width="26" height="26" viewBox="0 0 28 28" style={{ strokeWidth: 1.4 }}>{toolIcons[k]}</Ico>
                  <ToolLabel>{t}</ToolLabel>
                </ToolItem>
              ))}
              <ToolRight>
                <CheckBox />辅助线
                <FullScreen>
                  <Ico width="25" height="25" viewBox="0 0 25 25" style={{ strokeWidth: 1.3 }}><rect x=".7" y=".7" width="23.600" height="23.600" rx="2"/><path d="M5 9V5h4M16 5h4v4M20 16v4h-4M9 20H5v-4"/></Ico>
                </FullScreen>
              </ToolRight>
            </Toolbar>

            <ButtonBar>
              {actions.map(a => (
                <ActBtn key={a.t} $w={a.w}>
                  <ActText>{a.t}</ActText>
                  {a.c && <ActCaret><Chevron /></ActCaret>}
                </ActBtn>
              ))}
              <PlusBox><PlusI s={18} w={1.8} /></PlusBox>
              <PageNav>{navs.map(d => <NavGlyph key={d} d={d} />)}</PageNav>
            </ButtonBar>

            <Body>
              <Sections>
                <Sec $h={145} $mt={13}>
                  <SecHead><DownTri $s={6} $c="#666" /><SecTitle>班级基本信息</SecTitle></SecHead>
                  <Fields>
                    <Field $mark>班级编号<em>*</em></Field>
                    <Field>班级名称</Field>
                    <Field>班主任
                      <FieldIcon><Ico width="17" height="18" viewBox="0 0 17 18" style={{ strokeWidth: 1.1 }}><circle cx="8.500" cy="5.500" r="4.500"/><path d="M1 17c0-4 3-7 7.500-7S16 13 16 17"/></Ico></FieldIcon>
                    </Field>
                  </Fields>
                </Sec>

                <Sec $h={258} $mt={12} $selected>
                  <SecHead>
                    <DownTri $s={6} $c="#666" /><SecTitle>任课老师</SecTitle>
                    <SecActions><RowAct>增行</RowAct><RowAct>删行</RowAct><SmallPlus><PlusI s={15} w={1.4} /></SmallPlus></SecActions>
                  </SecHead>
                  <FloatBtns>
                    <FloatBtn><Ico width="20" height="20" viewBox="0 0 20 20" style={{ strokeWidth: 1.3 }}><rect x="4" y="1.500" width="14" height="14" rx="1"/><path d="M2 5v12a1 1 0 0 0 1 1h12M11 5v7M7.500 8.500h7"/></Ico></FloatBtn>
                    <FloatBtn><Ico width="20" height="20" viewBox="0 0 20 20" style={{ strokeWidth: 1.3 }}><path d="M3 4h14M7.500 4V2h5v2M5 4l.8 14h8.400L15 4M8.500 8v6M11.500 8v6"/></Ico></FloatBtn>
                  </FloatBtns>
                  <Table>
                    <HeadCell><Radio $head /></HeadCell>
                    <HeadCell>序号</HeadCell>
                    <TeacherHead>老师</TeacherHead>
                    <Rest />
                    {[1, 2, 3].map(n => (
                      <React.Fragment key={n}>
                        <BodyCell><Radio /></BodyCell>
                        <BodyCell>{n}</BodyCell>
                        <TeacherCell $last={n === 3} />
                      </React.Fragment>
                    ))}
                  </Table>
                </Sec>

                <Sec $mt={12}>
                  <SecHead><DownTri $s={6} $c="#666" /><SecTitle>附件</SecTitle></SecHead>
                  <TipRow>支持ctrl+v粘贴截图</TipRow>
                  <Upload>点击或拖拽上传</Upload>
                </Sec>
              </Sections>
              <Track><Thumb /></Track>
            </Body>
          </CenterBody>

          <Crumbs>
            <CrumbEnd $w={15}><SideTri $dir="l" /></CrumbEnd>
            <CrumbRow>
              {["班级管理", "Flex面板", "内容区", "任课老师", "高级面板子容器", "单据体"].map(c => <Crumb key={c}>{c}</Crumb>)}
            </CrumbRow>
            <CrumbActive>用户2</CrumbActive>
            <CrumbEnd $w={15} $right><SideTri $dir="r" /></CrumbEnd>
          </Crumbs>
        </Center>

        <RightPanel>
          <PanelTitle $pl={145}>控件属性</PanelTitle>
          <RightTabs><RightTab $active>业务</RightTab><RightTab>标识</RightTab></RightTabs>
          <PropSection $h={42}>常规<DownTri $s={6} $c="#aab0c4" /></PropSection>
          <Prop label="(标识)" mt={6}><PropInput $focus><Mono>epqi_<mark>userfield</mark></Mono></PropInput></Prop>
          <Prop label="名称" mt={11}><PropInput>老师</PropInput></Prop>
          <Prop label="元素类型" mt={12}><PropValue>分录字段</PropValue></Prop>
          <Prop label="宽度" mt={10}><PropInput /></Prop>
          <Prop label="隐藏元素" h={26} mt={16}><Toggle /></Prop>
          <Prop label="可见性" h={105} mt={14}>
            <BtnBox>
              <OptBtn>初始可见</OptBtn><OptBtn>新增可见</OptBtn>
              <OptBtn>修改可见</OptBtn><OptBtn>查看可见</OptBtn>
              <OptBtn>提交可见</OptBtn><OptBtn>审核可见</OptBtn>
            </BtnBox>
          </Prop>
          <Prop label="锁定性" h={38} mt={11}>
            <BtnBox $single><OptBtn>提交锁定</OptBtn><OptBtn>审核锁定</OptBtn></BtnBox>
          </Prop>
          <Prop label="显示为超链" h={26} mt={16}><Toggle /></Prop>
          <Prop label="帮助文本" mt={14}><PropInput /></Prop>
          <Prop label="即时触发值更新" h={36} mt={10}><Toggle $on /></Prop>
          <Prop label="快捷新增" h={26} mt={15}><Toggle $on /></Prop>
          <PropSection $h={44} $mt={17}>字段<DownTri $s={6} $c="#aab0c4" /></PropSection>
          <Prop label="字段类型" mt={6}><PropValue>用户</PropValue></Prop>
          <Prop label="字段名" mt={11}><PropInput $tall><Mono>fk_epqi_userfield</Mono></PropInput></Prop>
        </RightPanel>
      </Main>

      <Taskbar>
        <Start><Ico width="22" height="22" viewBox="0 0 22 22" style={{ strokeWidth: 1.2 }}><path d="M1 3h15M1 19h15M1 8h15v6H1zM20 3v5M20 11v1M20 15v4"/></Ico></Start>
        <TaskItem $w={146} $mr={6} $pl={10} $active><EdgeIcon />班级管理 和...</TaskItem>
        <TaskItem><IjIcon />jcloud-api ...</TaskItem>
        <TaskItem><CmdIcon />管理员:&nbsp;&nbsp;Zo...</TaskItem>
        <TaskItem><CmdIcon />管理员:&nbsp;&nbsp;M...</TaskItem>
        <TaskItem><CmdIcon />MC SYSTEM</TaskItem>
        <TaskItem><CmdIcon />COSMIC S...</TaskItem>
        <TaskItem $pl={9}><ExplorerIcon />E:\lyj\king...</TaskItem>
        <TaskItem><WxPair />微信</TaskItem>
        <TaskItem><BandicamIcon />Bandicam</TaskItem>
        <Tray>
          <TrayIcon $mr={12}><Ico width="16" height="10" viewBox="0 0 16 10"><path d="M1 9l7-7 7 7"/></Ico></TrayIcon>
          <TrayIcon $mr={9}><svg width="21" height="28" viewBox="0 0 21 28"><rect width="21" height="28" rx="4" fill="#e85f1c"/><path d="M5 7l11 7-11 7z" fill="#fff"/></svg></TrayIcon>
          <TrayIcon $mr={10}><WxPair s={20} /></TrayIcon>
          <TrayIcon $mr={17}><svg width="18" height="24" viewBox="0 0 18 24"><ellipse cx="9" cy="9" rx="6" ry="8" fill="#111"/><ellipse cx="9" cy="12" rx="4" ry="4.500" fill="#fff"/><ellipse cx="9" cy="18" rx="7" ry="4" fill="#d8232a"/><path d="M5 21l-2 3h5zM13 21l2 3h-5z" fill="#e9a411"/></svg></TrayIcon>
          <TrayIcon $mr={13}><Ico width="12" height="20" viewBox="0 0 12 20" style={{ strokeWidth: 1 }}><path d="M1 18a3 3 0 0 1 3-3M1 13a7 7 0 0 1 7-7M1 8a11 11 0 0 1 10-6"/></Ico></TrayIcon>
          <TrayIcon $mr={10}><Ico width="20" height="14" viewBox="0 0 20 14" style={{ strokeWidth: 1.1 }}><rect x="1" y="3" width="18" height="10" fill="#dfe4e8" stroke="none"/><path d="M1 1h8"/></Ico></TrayIcon>
          <TrayIcon $mr={17}><Ico width="12" height="18" viewBox="0 0 12 18" style={{ strokeWidth: 1 }}><path d="M1 6h3l3-4v14l-3-4H1zM9 6q2 3 0 6"/></Ico></TrayIcon>
          <span>ENG</span>
          <Clock><div>2:13</div><div>2022/4/7</div></Clock>
        </Tray>
      </Taskbar>

      <Overlay>
        {marks.map(([x, y]) => <Mark key={x + "-" + y} $x={x} $y={y}>临时许可</Mark>)}
        <Spot />
        <Pointer width="14" height="20" viewBox="0 0 14 20"><path d="M1 1v14l4-3 3 6 3-1-3-6h5z" fill="#111" stroke="#fff" strokeWidth=".8"/></Pointer>
      </Overlay>
    </Page>
  );
}
